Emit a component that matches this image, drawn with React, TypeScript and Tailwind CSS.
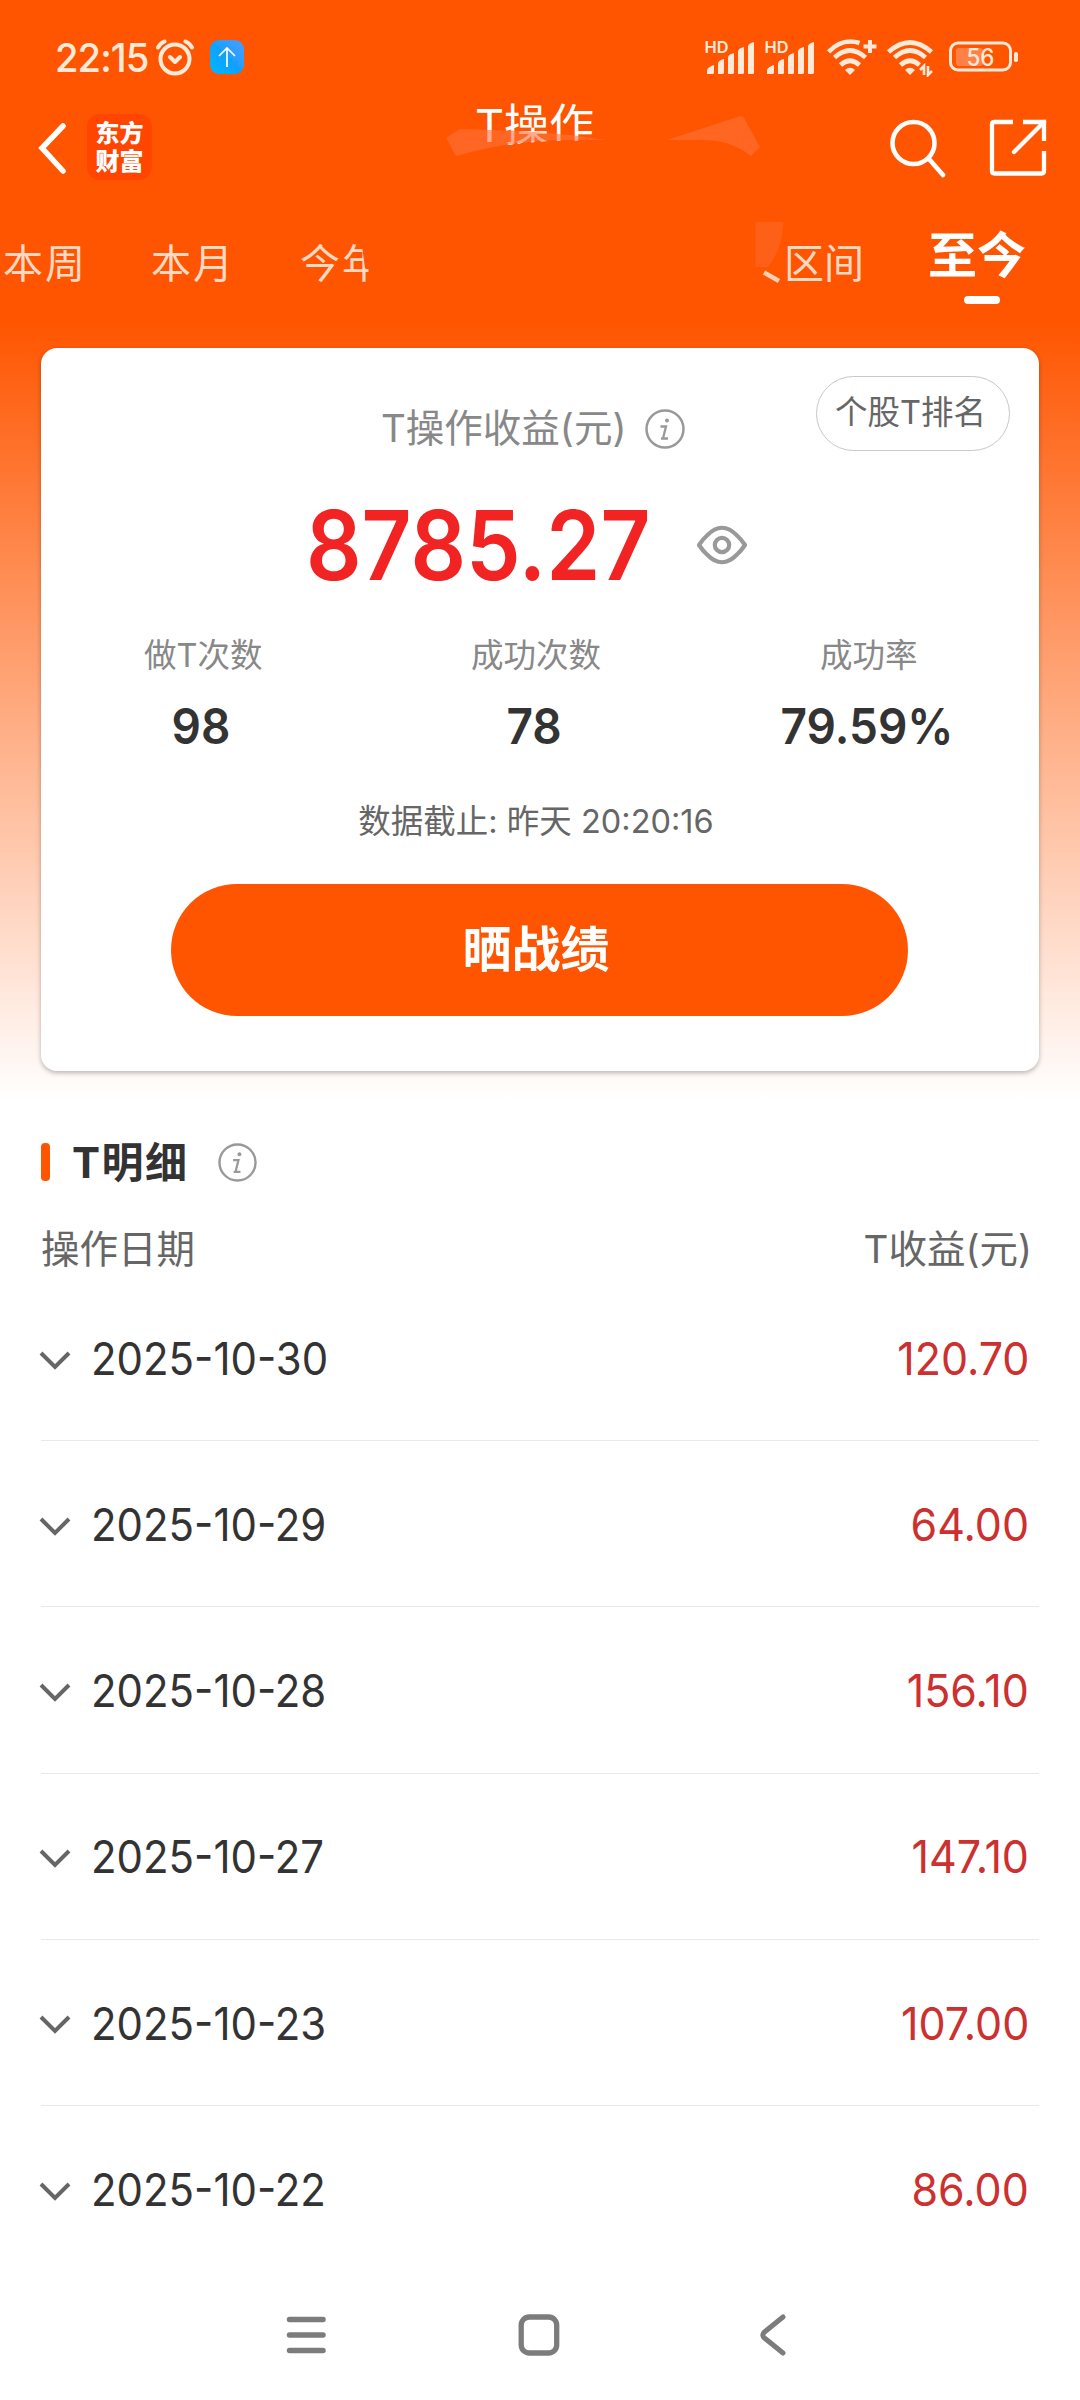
import type { ReactNode } from 'react';

const LATIN = "font-['Inter','Noto_Sans_CJK_SC',sans-serif]";

const records = [
  { date: '2025-10-30', profit: '120.70' },
  { date: '2025-10-29', profit: '64.00' },
  { date: '2025-10-28', profit: '156.10' },
  { date: '2025-10-27', profit: '147.10' },
  { date: '2025-10-23', profit: '107.00' },
  { date: '2025-10-22', profit: '86.00' },
];

const stats = [
  { label: '做T次数', value: '98' },
  { label: '成功次数', value: '78' },
  { label: '成功率', value: '79.59%' },
];

function Signal() {
  return (
    <svg className="overflow-visible" width="52" height="38" viewBox="0 -2 52 38" fill="#ffe9d9">
      <text x="0.500" y="13" fontSize="16.500" fontWeight="600" fontFamily="Inter" textLength="24" lengthAdjust="spacingAndGlyphs">HD</text>
      <path d="M3 34v-4q1-3 7-5v8l-1 1zM14 34V23q1-3 6-4v14l-1 1zM24 34V17q1-3 6-4v20l-1 1zM34 34V11q1-3 6-4v26l-1 1zM44 34V6q1-3 6-4v31l-1 1z" />
    </svg>
  );
}

function Wifi({ children, top }: { children: ReactNode; top: string }) {
  return (
    <svg width="50" height="38" viewBox="0 0 50 38" fill="none" stroke="#ffe9d9" strokeWidth="4.600">
      <path d={top} />
      <path d="M7.500 18.500Q23 4.500 38.500 18.500" />
      <path d="M13.500 26Q23 17.500 32.500 26" />
      <path d="M23 36l-5-5q5-4.500 10 0z" fill="#ffe9d9" stroke="none" />
      {children}
    </svg>
  );
}

function StatusBar() {
  return (
    <div className="flex h-[114px] items-start pl-[55px] pt-[37px]">
      <span className="w-[100px] origin-left scale-x-[0.955] whitespace-nowrap text-[40px] leading-[41px] font-medium tracking-[-1px] text-[#ffe9d9]">22:15</span>
      <svg className="mt-[2px]" width="40" height="38" viewBox="0 0 40 38" fill="none" stroke="#ffe9d9" strokeWidth="4" strokeLinecap="round">
        <circle cx="20" cy="20" r="14.500" />
        <path d="M3 8.500Q5.500 4 9.500 2.500M37 8.500Q34.500 4 30.500 2.500M15 18l5 5 5-5" strokeLinejoin="round" />
      </svg>
      <div className="ml-[15px] mt-[3px] flex size-[34px] items-center justify-center rounded-[9px] bg-linear-to-tr from-[#00b8ff] via-[#0fa0ff] to-[#4b9cff]">
        <svg width="18" height="20" viewBox="0 0 18 20" fill="none" stroke="#fff" strokeWidth="1.700"><path d="M9 20V1M1 9l8-8 8 8" /></svg>
      </div>
      <div className="ml-auto flex w-[376px] items-start pt-[2px]">
        <div className="mt-[-1px] flex w-[123px] gap-[8px]"><Signal /><Signal /></div>
        <div className="w-[60px]">
          <Wifi top="M1.500 13Q15 -1.500 32.500 4"><path d="M43 1v13M36.500 7.500h13" strokeWidth="4" /></Wifi>
        </div>
        <div className="w-[61px]">
          <Wifi top="M1.500 13Q23 -6 44.500 13"><path d="M37 36v-9l-4 4M41 27v9l4-4" strokeWidth="2.600" /></Wifi>
        </div>
        <svg className="mt-[1px]" width="72" height="34" viewBox="0 0 72 34" fill="none">
          <rect x="2.500" y="3" width="60" height="27" rx="7.500" stroke="#ffe9d9" strokeWidth="3" />
          <rect x="8" y="8" width="27" height="18" rx="3" fill="#ff8146" />
          <text x="18.500" y="25.500" fontSize="24" fontWeight="500" fontFamily="Inter" fill="#ffe9d9" textLength="28" lengthAdjust="spacingAndGlyphs">56</text>
          <rect x="66" y="12" width="4" height="10" rx="1.800" fill="#ffe9d9" />
        </svg>
      </div>
    </div>
  );
}

function Header() {
  return (
    <header className="relative flex h-[86px] items-start text-white">
      <svg className="ml-[36px] mt-[7px]" width="32" height="54" viewBox="0 0 32 54" fill="none" stroke="#fff" strokeWidth="5.500" strokeLinecap="round" strokeLinejoin="miter"><path d="M27 5L6 27l21 23" /></svg>
      <div className="ml-[19px] flex h-[66px] w-[65px] flex-col items-center justify-center rounded-[13px] bg-[#ff4500] pt-[2px] text-[24px] leading-[28px] font-black">
        <span>东方</span>
        <span>财富</span>
      </div>
      <h1 className="ml-[323px] mt-[-15px] whitespace-nowrap text-[45px] leading-[54px] font-normal">T操作</h1>
      <svg className="absolute left-[440px] top-0 h-[60px] w-[330px]" viewBox="440 114 330 60">
        <path d="M456 156Q520 140 570 140.500H606V174H456Z" fill="#ff5500" />
        <path d="M446 138L460 129 520 131Q570 134 606 140H560Q510 141 456 156Z" fill="#ff703a" fillOpacity=".6" />
        <path d="M667 140L739 116.500Q742 115 744 118L760 147 751 156Q731 140 703 140Z" fill="#ff6621" />
      </svg>
      <div className="ml-auto flex pt-[4px] pr-[32px]">
        <svg width="58" height="60" viewBox="0 0 58 60" fill="none" stroke="#fff" strokeWidth="4.600" strokeLinecap="round"><circle cx="25.500" cy="25" r="21" /><path d="M41 41l14 16" /></svg>
        <svg className="ml-[42px]" width="60" height="60" viewBox="0 0 60 60" fill="none" stroke="#fff" strokeWidth="4.300">
          <path d="M25 4H6.500Q4 4 4 6.500V53Q4 55.500 6.500 55.500H53.500Q56 55.500 56 53V33" />
          <path d="M35 4H56V23" />
          <path d="M56 4L26 34" strokeLinecap="round" />
        </svg>
      </div>
    </header>
  );
}

function Tabs() {
  return (
    <nav className="relative flex h-[148px] items-start pl-[3px] pt-[34px] text-[40px] leading-[60px] text-[#ffd9c3]">
      <span className="w-[148px] tracking-[2px]">本周</span>
      <span className="w-[149px] tracking-[2px]">本月</span>
      <span className="w-[484px] tracking-[2px]">今年</span>
      <span className="w-[144px]">区间</span>
      <div className="mt-[-12px] flex flex-col items-center text-[49px] font-bold text-white">
        <span className="leading-[68px]">至今</span>
        <span className="mt-[6px] ml-[9px] h-[8px] w-[36px] rounded-full bg-white" />
      </div>
      <svg className="absolute left-[355px] top-[20px] h-[70px] w-[435px]" viewBox="355 220 435 70" fill="none">
        <path d="M362 220L362.500 250 365 268H368.500V290H390V220Z" fill="#ff5500" />
        <path d="M755.500 222H783.500Q782 250 768 267H755.500Z" fill="#fd6016" />
        <path d="M764 272.500L779 281" stroke="#ffcfb2" strokeWidth="4.500" />
      </svg>
    </nav>
  );
}

function Info({ size }: { size: number }) {
  return (
    <svg width={size} height={size} viewBox="0 0 40 40" fill="none" stroke="#999">
      <circle cx="20" cy="20" r="18.500" strokeWidth="2.500" />
      <circle cx="22" cy="11.500" r="2" fill="#999" stroke="none" />
      <path d="M15.500 17.500H21L18.500 27.500Q18 30 20.500 29.500H23M16 29.500H19" strokeWidth="2.300" />
    </svg>
  );
}

function SummaryCard() {
  return (
    <section className="relative mx-[41px] flex h-[723px] flex-col items-center rounded-[16px] bg-white shadow-[0_2px_5px_rgba(0,0,0,0.28)]">
      <button className="absolute top-[28px] right-[29px] flex h-[75px] w-[194px] items-center justify-center rounded-full border border-[#c8c8c8] pr-[5px] text-[32.500px] text-[#666]">个股T排名</button>
      <div className="mt-[57px] ml-[340px] flex h-[48px] items-center self-start text-[38.500px] text-[#888]">
        <span className="whitespace-nowrap">T操作收益(元)</span>
      </div>
      <div className="absolute left-[604px] top-[61px]"><Info size={40} /></div>
      <div className="mt-[32px] ml-[265px] flex h-[120px] items-center self-start">
        <span className="w-[390px] origin-left scale-x-[0.905] whitespace-nowrap text-[96px] leading-[120px] font-semibold text-[#f12323]">8785.27</span>
        <svg width="52" height="42" viewBox="0 0 52 42" fill="none" stroke="#999" strokeWidth="4.200"><path d="M3 21Q7 15 11 11.500Q26 -4 41 11.500Q45 15 49 21Q45 27 41 30.500Q26 46 11 30.500Q7 27 3 21Z" strokeLinejoin="round" /><circle cx="26" cy="21" r="7.200" /></svg>
      </div>
      <div className="mt-[27px] mr-[8px] grid w-[998px] grid-cols-3">
        {stats.map((s) => (
          <div key={s.label} className="flex flex-col items-center">
            <span className="text-[32.500px] leading-[48px] text-[#888]">{s.label}</span>
            <span className="mt-[16px] mr-[4px] inline-block scale-x-[0.92] text-[50px] leading-[60px] font-semibold text-[#333]">{s.value}</span>
          </div>
        ))}
      </div>
      <p className="mt-[42px] mr-[8px] text-[32.500px] leading-[48px] text-[#666]">数据截止: 昨天 20:20:16</p>
      <button className="mt-[38px] mr-[2px] flex h-[132px] w-[737px] items-center justify-center rounded-full bg-[#ff5500] pr-[6px] text-[49px] font-bold text-white">晒战绩</button>
    </section>
  );
}

function Details() {
  return (
    <section className="mx-[41px] mt-[64px]">
      <div className="flex h-[54px] items-center">
        <span className="h-[38px] w-[9px] rounded-[4px] bg-[#ff5500]" />
        <h2 className="ml-[22px] w-[124px] whitespace-nowrap pt-[2px] text-[42px] leading-[54px] font-bold tracking-[1.500px] text-[#333]">T明细</h2>
        <div className="ml-[22px]"><Info size={39} /></div>
      </div>
      <div className="mt-[34px] flex h-[53px] items-center justify-between pr-[7px] text-[38.500px] text-[#666]">
        <span>操作日期</span>
        <span>T收益(元)</span>
      </div>
      <ul className="mt-[-1px]">
        {records.map((r) => (
          <li key={r.date} className="flex h-[166.200px] items-center border-b border-[#e9e9e9] pr-[10px] pt-[2px] last:border-transparent">
            <svg className="ml-[-2px] mt-[4px]" width="32" height="22" viewBox="0 0 32 22" fill="none" stroke="#666" strokeWidth="4"><path d="M2 3l14 14L30 3" /></svg>
            <span className="ml-[20px] inline-block origin-left scale-x-[0.932] text-[45px] text-[#333]">{r.date}</span>
            <span className="ml-auto inline-block origin-right scale-x-[0.955] text-[45px] text-[#cc302f]">{r.profit}</span>
          </li>
        ))}
      </ul>
    </section>
  );
}

function NavBar() {
  return (
    <footer className="mt-[41px] flex h-[44px] items-center pl-[286px]">
      <svg width="41" height="44" viewBox="0 0 41 44" stroke="#7c7c7c" strokeWidth="5.500" strokeLinecap="round"><path d="M3.500 6.500H37M3.500 22H37M3.500 37.500H37" /></svg>
      <svg className="ml-[190px]" width="44" height="44" viewBox="0 0 44 44" fill="none" stroke="#7c7c7c" strokeWidth="5.300"><rect x="4.200" y="4" width="35.500" height="36" rx="8" /></svg>
      <svg className="ml-[196px]" width="32" height="44" viewBox="0 0 32 44" fill="none" stroke="#7c7c7c" strokeWidth="5" strokeLinecap="round"><path d="M26 4L7.500 19Q4 22 7.500 25L26 40" /></svg>
    </footer>
  );
}

export default function App() {
  return (
    <main className={`${LATIN} h-[2400px] w-[1080px] overflow-hidden bg-[linear-gradient(to_bottom,#ff5500_0,#ff5500_320px,#ffffff_1100px)]`}>
      <StatusBar />
      <Header />
      <Tabs />
      <SummaryCard />
      <Details />
      <NavBar />
    </main>
  );
}
